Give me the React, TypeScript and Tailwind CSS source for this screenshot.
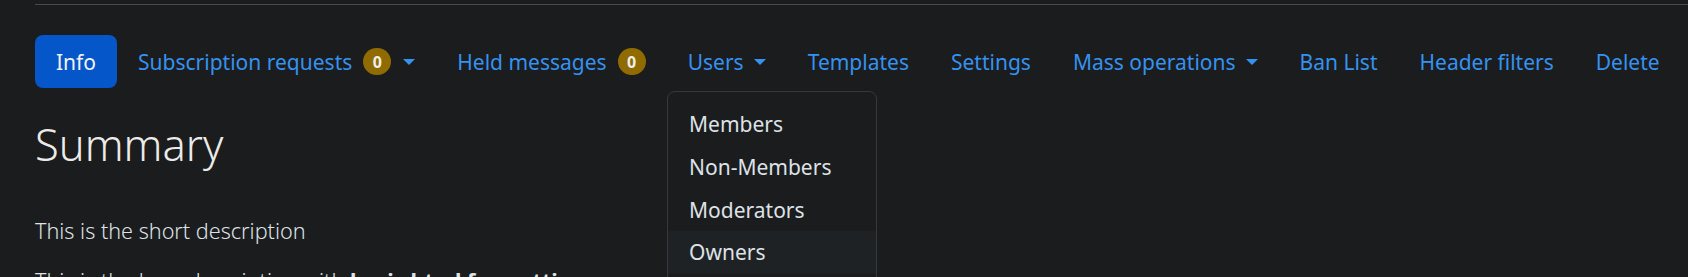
import React from "react";

type NavItem = {
  label: string;
  badge?: number;
  caret?: boolean;
  active?: boolean;
};

const navItems: NavItem[] = [
  { label: "Info", active: true },
  { label: "Subscription requests", badge: 0, caret: true },
  { label: "Held messages", badge: 0 },
  { label: "Users", caret: true },
  { label: "Templates" },
  { label: "Settings" },
  { label: "Mass operations", caret: true },
  { label: "Ban List" },
  { label: "Header filters" },
  { label: "Delete" },
];

const userMenu = ["Members", "Non-Members", "Moderators", "Owners"];

function Caret({ afterBadge }: { afterBadge?: boolean }) {
  return (
    <span
      className={`${afterBadge ? "ml-[12px]" : "ml-[10px]"} inline-block h-0 w-0 border-x-[6px] border-t-[6px] border-x-transparent border-t-[#3592ef]`}
    />
  );
}

function Badge({ value }: { value: number }) {
  return (
    <span className="ml-[11px] inline-flex h-[27px] min-w-[28px] items-center justify-center rounded-full bg-[#8f6b00] px-[9px] text-[16px] font-bold leading-none text-[#f0f0f0]">
      {value}
    </span>
  );
}

function UsersDropdown() {
  return (
    <div className="absolute left-0 top-[calc(100%+3px)] z-10 min-w-[210px] rounded-[8px] border border-[#37383b] bg-[#1b1c1e] py-[10.67px]">
      {userMenu.map((item, i) => (
        <div
          key={item}
          className={`whitespace-nowrap px-[21.33px] py-[5.33px] text-[21px] leading-[32px] text-[#dee2e6] ${
            i === userMenu.length - 1 ? "bg-[#1e2225]" : ""
          }`}
        >
          {item}
        </div>
      ))}
    </div>
  );
}

export default function App() {
  return (
    <div
      className="min-h-screen bg-[#1b1c1e] text-[#dee2e6]"
      style={{ fontFamily: '"Noto Sans", "Open Sans", sans-serif' }}
    >
      <div className="pl-[35px] pt-[4px]">
        <div className="h-px bg-[#47484b]" />
      </div>

      <div className="px-[35px]">
        <nav className="mt-[30px] flex items-center whitespace-nowrap">
          {navItems.map((item) => (
            <div key={item.label} className="relative shrink-0">
              <a
                href="#"
                className={`flex items-center rounded-[8px] px-[21px] py-[10.67px] text-[21px] leading-[32px] ${
                  item.active ? "bg-[#0556c8] text-[#f1f3f5]" : "text-[#3592ef]"
                }`}
              >
                {item.label}
                {item.badge !== undefined && <Badge value={item.badge} />}
                {item.caret && <Caret afterBadge={item.badge !== undefined} />}
              </a>
              {item.label === "Users" && <UsersDropdown />}
            </div>
          ))}
        </nav>

        <h2 className="mt-[31px] mb-[10.67px] text-[43.5px] font-light leading-[51.2px] text-[#ecebe8]">
          Summary
        </h2>

        <div className="pt-[34px] text-[21.6px] font-light leading-[32px]">
          <p className="mb-[18px]">This is the short description</p>
          <p>
            This is the long description with <b className="font-bold">basic html formatting</b>.
          </p>
        </div>
      </div>
    </div>
  );
}
